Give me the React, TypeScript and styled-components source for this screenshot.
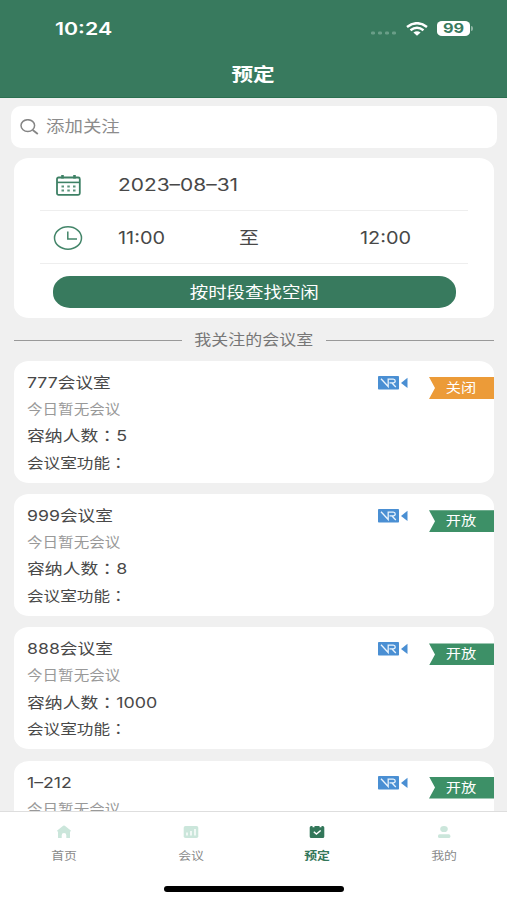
import React from 'react';
import styled, { createGlobalStyle } from 'styled-components';

const GlobalStyle = createGlobalStyle`
  * { box-sizing: border-box; }
  body {
    margin: 0;
    background: #f0f0f0;
    font-family: Inter, "Noto Sans CJK SC", sans-serif;
    color: #444;
  }
`;

const Screen = styled.div`
  width: 507px;
  height: 900px;
  display: flex;
  flex-direction: column;
  overflow: hidden;
  background: #f0f0f0;
`;

/* Text in a wide face: the glyphs are extended sideways from their anchor. */
const Text = styled.span<{ $size: number; $wide?: number; $color?: string; $weight?: number; $anchor?: string }>`
  display: inline-block;
  white-space: nowrap;
  line-height: 1;
  font-size: ${(p) => p.$size}px;
  font-weight: ${(p) => p.$weight ?? 400};
  color: ${(p) => p.$color ?? '#484848'};
  transform: scaleX(${(p) => p.$wide ?? 1.17});
  transform-origin: ${(p) => p.$anchor ?? 'left'} center;
`;

/* Full-width colon, centred in its cell. */
const Colon = styled.span`
  font-family: "Noto Sans CJK TC", sans-serif;
`;

const Header = styled.header`
  flex: none;
  height: 98px;
  background: #387a5e;
  border-bottom: 1px solid #2b7050;
`;

const StatusBar = styled.div`
  height: 57px;
  padding: 0 34px 0 55px;
  display: flex;
  align-items: center;
  justify-content: space-between;
`;

const StatusIcons = styled.div`
  display: flex;
  align-items: center;
`;

const Title = styled.div`
  height: 35px;
  padding-right: 1px;
  display: flex;
  align-items: center;
  justify-content: center;
`;

const Content = styled.main`
  flex: 1;
  min-height: 0;
  overflow: hidden;
  padding: 7.5px 13px 0 14px;
`;

const Search = styled.div`
  height: 42.5px;
  margin: 0 -3px;
  padding-left: 9px;
  display: flex;
  align-items: center;
  gap: 7px;
  border-radius: 10px;
  background: #fff;
`;

const Booking = styled.section`
  height: 160px;
  margin-top: 10px;
  padding: 0 26px;
  border-radius: 15px / 13px;
  background: #fff;
`;

const Field = styled.div<{ $height: number }>`
  height: ${(p) => p.$height}px;
  padding-top: 4px;
  display: grid;
  grid-template-columns: 78px 121px 121px 1fr;
  align-items: center;
  border-bottom: 1px solid #eee;
`;

const FieldIcon = styled.div`
  width: 30px;
  height: 26px;
  margin: -1px 0 0 13px;
  display: flex;
  align-items: center;
  justify-content: center;
`;

const FindButton = styled.button`
  display: flex;
  width: 403px;
  height: 32px;
  margin: 12px 0 0 12.5px;
  padding: 1px 0 0;
  align-items: center;
  justify-content: center;
  border: 0;
  border-radius: 17px / 15px;
  background: #387a5e;
  font-family: inherit;
`;

const SectionTitle = styled.div`
  height: 43px;
  padding-top: 1px;
  display: grid;
  grid-template-columns: 168px 1fr 168px;
  align-items: center;
  justify-items: center;
`;

const Rule = styled.i`
  width: 100%;
  height: 1px;
  background: #999;
`;

const Room = styled.article`
  height: 122px;
  margin-bottom: 11.2px;
  padding: 9px 0 0 13px;
  display: flex;
  justify-content: space-between;
  border-radius: 15px / 13px;
  background: #fff;
`;

const RoomInfo = styled.div`
  display: grid;
  grid-template-rows: repeat(4, 26.4px);
  align-items: center;
`;

const RoomState = styled.div`
  height: 30px;
  display: flex;
  align-items: flex-start;
  gap: 21px;
  padding-top: 6px;
`;

const Ribbon = styled.div<{ $open: boolean }>`
  width: 65px;
  height: 22px;
  margin-top: 1px;
  padding-bottom: 1px;
  display: flex;
  align-items: center;
  justify-content: center;
  background: ${(p) => (p.$open ? '#3d9067' : '#ec9b38')};
  clip-path: polygon(0 0, 100% 0, 100% 100%, 0 100%, 6px 50%);
`;

const TabBar = styled.nav`
  flex: none;
  height: 89px;
  padding-top: 13px;
  border-top: 1px solid #dedede;
  background: #fff;
`;

const Tabs = styled.div`
  display: grid;
  grid-template-columns: repeat(4, 126.5px);
  height: 63px;
  padding-left: 1px;
`;

const Tab = styled.div`
  display: flex;
  flex-direction: column;
  align-items: center;
  gap: 11.5px;
`;

const HomeIndicator = styled.div`
  width: 180px;
  height: 6px;
  margin: -2px auto 0;
  border-radius: 3px;
  background: #000;
`;

const Wifi = () => (
  <svg width="22" height="14" viewBox="0 0 22 14" fill="none" stroke="#fff" strokeWidth="2.5">
    <path d="M1 4.9Q11-2.5 21 4.9" />
    <path d="M4.5 8.2Q11 3.4 17.5 8.2" />
    <path d="M7.4 10.6Q11 7.8 14.6 10.6L11 13.8Z" fill="#fff" stroke="none" />
  </svg>
);

const BatteryRow = styled.div`
  display: flex;
  align-items: center;
  gap: 1px;
  margin-left: 9px;
`;

const Battery = styled.div`
  width: 33px;
  height: 15px;
  display: flex;
  align-items: center;
  justify-content: center;
  border-radius: 5px / 4px;
  background: #fff;
`;

const BatteryTip = styled.i`
  width: 2px;
  height: 5px;
  border-radius: 0 2px 2px 0;
  background: #8fb5a4;
`;

const Signal = () => (
  <svg width="36" height="14" viewBox="0 0 36 14" fill="#6a9e88">
    {[0, 7, 14, 21].map((x) => (
      <rect key={x} x={x + 1} y="9.5" width="4" height="3" rx="1.2" />
    ))}
  </svg>
);

const SearchIcon = () => (
  <svg width="19" height="16" viewBox="0 0 19 16" fill="none" stroke="#858585" strokeWidth="1.5">
    <ellipse cx="7.8" cy="6.6" rx="6.8" ry="5.9" />
    <path d="M12.7 11L17.8 15" strokeWidth="1.8" />
  </svg>
);

const CalendarIcon = () => (
  <svg width="25" height="21" viewBox="0 0 25 21" fill="none" stroke="#3e8165">
    <rect x="1" y="2.5" width="22.8" height="17.3" rx="1.5" strokeWidth="1.8" />
    <path d="M1 7.4H24" strokeWidth="1.6" />
    <path d="M6.5 0V3.5M18.5 0V3.5" strokeWidth="2.6" />
    <path d="M5.5 11.5H8M11.3 11.5H13.8M17 11.5H19.5M5.5 15.5H8M11.3 15.5H13.8M17 15.5H19.5" strokeWidth="2" opacity=".85" />
  </svg>
);

const ClockIcon = () => (
  <svg width="30" height="26" viewBox="0 0 30 26" fill="none" stroke="#438569" strokeWidth="1.5">
    <ellipse cx="15" cy="13" rx="13.5" ry="11.2" />
    <path d="M14.8 6.5V14H24" />
  </svg>
);

const VrIcon = () => (
  <svg width="30" height="14" viewBox="0 0 30 14" fill="none">
    <rect width="21" height="13.5" rx=".8" fill="#4a8fd3" />
    <path d="M3 2.8L10.2 10.5V3.2H15.2Q17.2 3.3 17.2 5Q17.2 6.8 15.2 6.9H11.5M14 7L17.8 11" stroke="#e9f3fc" strokeWidth="1.3" />
    <path d="M29.5 1.8V12L23 7Z" fill="#4a8fd3" />
  </svg>
);

const HomeIcon = () => (
  <svg width="16" height="14" viewBox="0 0 16 14">
    <path d="M7.2.8Q8 .2 8.8.8L14.8 5.6Q15.2 6 14.5 6.4H14V12.4Q14 13 13.4 13H10.3V10.2Q10.3 8 8 8T5.7 10.2V13H2.6Q2 13 2 12.4V6.4H1.5Q.8 6 1.2 5.6Z" fill="#cbe6db" />
  </svg>
);

const MeetingIcon = () => (
  <svg width="16" height="14" viewBox="0 0 16 14">
    <rect x=".7" y="1" width="14.6" height="12" rx="1.8" fill="#cbe6db" />
    <path d="M4 7.5V10.5M8 6V10.5M12 4V10.5" stroke="#fff" strokeWidth="1.4" />
  </svg>
);

const BookIcon = () => (
  <svg width="16" height="14" viewBox="0 0 16 14" fill="none">
    <path d="M2.3 1H3.5V2.2H5.5V1H10.5V2.2H12.5V1H13.7Q15.3 1 15.3 2.5V11.5Q15.3 13 13.7 13H2.3Q.7 13 .7 11.5V2.5Q.7 1 2.3 1Z" fill="#33775a" />
    <path d="M4.8 6.8L7.4 9.1L11.7 5.5" stroke="#fff" strokeWidth="1.5" />
  </svg>
);

const ProfileIcon = () => (
  <svg width="16" height="14" viewBox="0 0 16 14" fill="#cbe6db">
    <ellipse cx="8" cy="4" rx="3.8" ry="3.1" />
    <rect x="2" y="9.3" width="12.4" height="3.7" rx="1.6" />
  </svg>
);

const rooms = [
  { name: '777会议室', seats: '5', open: false },
  { name: '999会议室', seats: '8', open: true },
  { name: '888会议室', seats: '1000', open: true },
  { name: '1–212', open: true },
];

const tabs = [
  { label: '首页', Icon: HomeIcon },
  { label: '会议', Icon: MeetingIcon },
  { label: '预定', Icon: BookIcon, active: true },
  { label: '我的', Icon: ProfileIcon },
];

export default function App() {
  return (
    <Screen>
      <GlobalStyle />
      <Header>
        <StatusBar>
          <Text $size={17.5} $weight={600} $color="#fff" $wide={1.22}>10:24</Text>
          <StatusIcons>
            <Signal />
            <Wifi />
            <BatteryRow>
              <Battery>
                <Text $size={13} $weight={700} $color="#387a5e" $wide={1.25} $anchor="center">99</Text>
              </Battery>
              <BatteryTip />
            </BatteryRow>
          </StatusIcons>
        </StatusBar>
        <Title>
          <Text $size={18} $weight={700} $color="#fff" $wide={1.2} $anchor="center">预定</Text>
        </Title>
      </Header>
      <Content>
        <Search>
          <SearchIcon />
          <Text $size={15.5} $color="#8c8c8c" $wide={1.19}>添加关注</Text>
        </Search>
        <Booking>
          <Field $height={52.5}>
            <FieldIcon><CalendarIcon /></FieldIcon>
            <Text $size={17} $wide={1.23}>2023–08–31</Text>
          </Field>
          <Field $height={53.5}>
            <FieldIcon><ClockIcon /></FieldIcon>
            <Text $size={17}>11:00</Text>
            <Text $size={17}>至</Text>
            <Text $size={17}>12:00</Text>
          </Field>
          <FindButton>
            <Text $size={15.5} $color="#fff" $wide={1.19} $anchor="center">按时段查找空闲</Text>
          </FindButton>
        </Booking>
        <SectionTitle>
          <Rule />
          <Text $size={14.5} $color="#777" $anchor="center">我关注的会议室</Text>
          <Rule />
        </SectionTitle>
        {rooms.map((room) => (
          <Room key={room.name}>
            <RoomInfo>
              <Text $size={14.5} $wide={1.22}>{room.name}</Text>
              <Text $size={13.2} $color="#999" $wide={1.18}>今日暂无会议</Text>
              {room.seats && (
                <>
                  <Text $size={14.5} $wide={1.23}>容纳人数<Colon>：</Colon>{room.seats}</Text>
                  <Text $size={14.2}>会议室功能<Colon>：</Colon></Text>
                </>
              )}
            </RoomInfo>
            <RoomState>
              <VrIcon />
              <Ribbon $open={room.open}>
                <Text $size={13} $color="#fff" $anchor="center">{room.open ? '开放' : '关闭'}</Text>
              </Ribbon>
            </RoomState>
          </Room>
        ))}
      </Content>
      <TabBar>
        <Tabs>
          {tabs.map(({ label, Icon, active }) => (
            <Tab key={label}>
              <Icon />
              <Text $size={11} $weight={active ? 700 : 400} $color={active ? '#33775a' : '#8a8a8a'} $anchor="center">
                {label}
              </Text>
            </Tab>
          ))}
        </Tabs>
        <HomeIndicator />
      </TabBar>
    </Screen>
  );
}
